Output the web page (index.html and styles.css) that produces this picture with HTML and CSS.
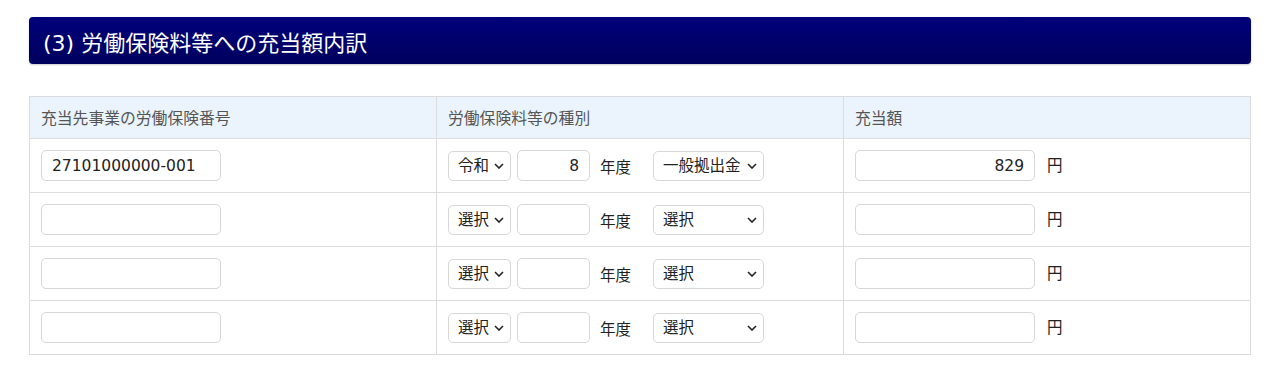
FILE: index.html
```html
<!DOCTYPE html>
<html lang="ja">
<head>
  <meta charset="UTF-8">
  <meta name="viewport" content="width=device-width,initial-scale=1">
  <title>労働保険料等への充当額内訳</title>
  <link rel="stylesheet" href="styles.css">
</head>
<body>
  <section class="block">
    <h2 class="block-title">(3) 労働保険料等への充当額内訳</h2>
    <table class="alloc">
      <thead>
        <tr>
          <th>充当先事業の労働保険番号</th>
          <th>労働保険料等の種別</th>
          <th>充当額</th>
        </tr>
      </thead>
      <tbody>
        <tr>
          <td><input type="text" class="in-no" value="27101000000-001"></td>
          <td>
            <div class="kind">
              <select class="sel-era"><option>令和</option></select>
              <input type="text" class="in-year" value="8">
              <span class="unit">年度</span>
              <select class="sel-kind"><option>一般拠出金</option></select>
            </div>
          </td>
          <td><input type="text" class="in-amt" value="829"><span class="yen">円</span></td>
        </tr>
        <tr>
          <td><input type="text" class="in-no"></td>
          <td>
            <div class="kind">
              <select class="sel-era"><option>選択</option></select>
              <input type="text" class="in-year">
              <span class="unit">年度</span>
              <select class="sel-kind"><option>選択</option></select>
            </div>
          </td>
          <td><input type="text" class="in-amt"><span class="yen">円</span></td>
        </tr>
        <tr>
          <td><input type="text" class="in-no"></td>
          <td>
            <div class="kind">
              <select class="sel-era"><option>選択</option></select>
              <input type="text" class="in-year">
              <span class="unit">年度</span>
              <select class="sel-kind"><option>選択</option></select>
            </div>
          </td>
          <td><input type="text" class="in-amt"><span class="yen">円</span></td>
        </tr>
        <tr>
          <td><input type="text" class="in-no"></td>
          <td>
            <div class="kind">
              <select class="sel-era"><option>選択</option></select>
              <input type="text" class="in-year">
              <span class="unit">年度</span>
              <select class="sel-kind"><option>選択</option></select>
            </div>
          </td>
          <td><input type="text" class="in-amt"><span class="yen">円</span></td>
        </tr>
      </tbody>
    </table>
  </section>
</body>
</html>
```

FILE: styles.css
```css
body { font-family: "DejaVu Sans", "Noto Sans CJK JP", sans-serif; background: #fff; color: #222; margin: 0; padding: 17px 29px; font-size: 15.5px; }
.block-title { margin: 0 0 32px; height: 47px; box-sizing: border-box; padding: 0 14px; display: flex; align-items: center; font-size: 22px; font-weight: normal; color: #fff; background: linear-gradient(#00007a, #00005e); border-radius: 4px; box-shadow: 0 1px 2px #0003; }
.alloc { width: 100%; border-collapse: collapse; table-layout: fixed; }
.alloc th, .alloc td { border: 1px solid #dcdcdc; text-align: left; }
.alloc th { background: #ebf4fc; font-weight: normal; color: #555; padding: 0 11px; height: 41px; font-size: 15.8px; }
.alloc td { height: 53px; padding: 0 11px; vertical-align: middle; }
input, select { font-family: inherit; font-size: 15.5px; color: #222; border: 1px solid #d6d6d6; border-radius: 5px; background: #fff; box-sizing: border-box; height: 31px; margin: 0; }
input { padding: 0 10px; }
.in-no { width: 180px; }
.in-amt { width: 180px; text-align: right; }
.in-year { width: 73px; text-align: right; }
.kind { display: flex; align-items: center; gap: 6px; }
select { appearance: none; -webkit-appearance: none; height: 30px; padding: 0 20px 0 9px; background-image: url("data:image/svg+xml,%3Csvg xmlns='http://www.w3.org/2000/svg' width='10' height='6' viewBox='0 0 10 6'%3E%3Cpath d='M1 1l4 4 4-4' fill='none' stroke='%23222' stroke-width='1.6'/%3E%3C/svg%3E"); background-repeat: no-repeat; background-position: right 6px center; }
.sel-era { width: 63px; }
.sel-kind { width: 111px; }
.unit { margin: 0 16px 0 4px; }
.yen { margin-left: 12px; }
```
